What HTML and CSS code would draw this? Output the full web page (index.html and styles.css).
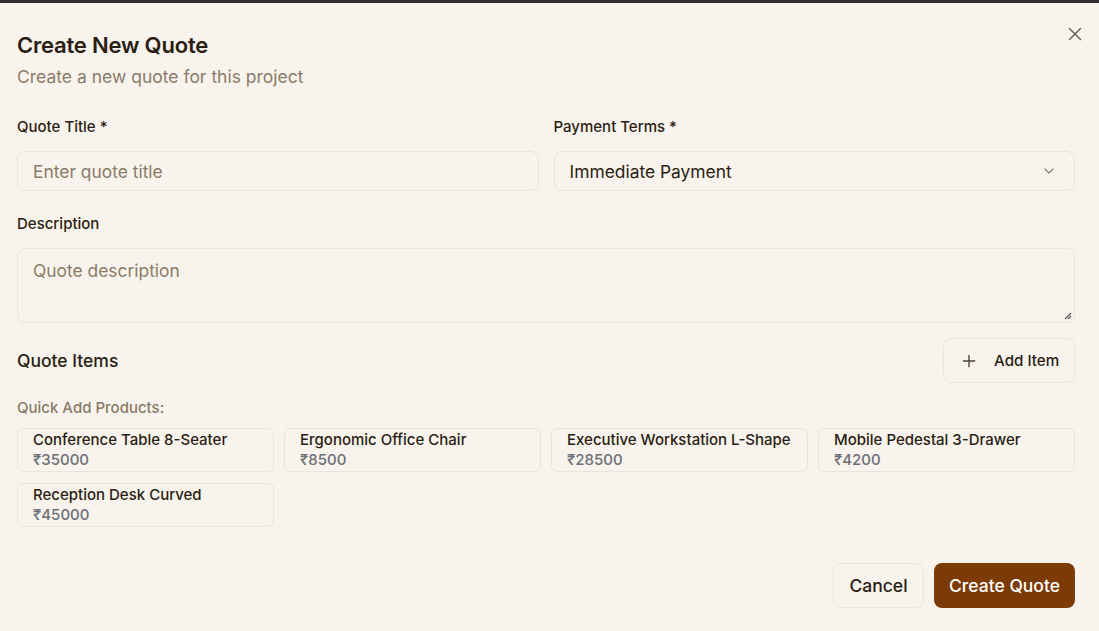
FILE: index.html
```html
<!DOCTYPE html>
<html lang="en">
<head>
<meta charset="utf-8">
<title>Create New Quote</title>
<link rel="stylesheet" href="styles.css">
</head>
<body>
<div class="topbar"></div>
<div class="dialog">
  <button class="close" aria-label="Close">
    <svg width="14" height="14" viewBox="0 0 14 14" fill="none" stroke="currentColor" stroke-width="1.5" stroke-linecap="round"><path d="M1.5 1.5 12.5 12.5M12.5 1.5 1.5 12.5"/></svg>
  </button>
  <header class="head">
    <h2 class="title">Create New Quote</h2>
    <p class="subtitle">Create a new quote for this project</p>
  </header>
  <div class="row2">
    <div class="field">
      <label class="label">Quote Title *</label>
      <div class="input placeholder">Enter quote title</div>
    </div>
    <div class="field">
      <label class="label">Payment Terms *</label>
      <div class="input select"><span>Immediate Payment</span>
        <svg width="16" height="16" viewBox="0 0 24 24" fill="none" stroke="currentColor" stroke-width="2" stroke-linecap="round" stroke-linejoin="round"><path d="m6 9 6 6 6-6"/></svg>
      </div>
    </div>
  </div>
  <div class="field desc">
    <label class="label">Description</label>
    <div class="textarea placeholder">Quote description
      <svg class="grip" width="10" height="10" viewBox="0 0 10 10" stroke="#555" stroke-width="1.2"><path d="M9 3 3 9M9 6 6 9"/></svg>
    </div>
  </div>
  <div class="items-head">
    <h3 class="items-title">Quote Items</h3>
    <button class="btn outline add">
      <svg width="18" height="18" viewBox="0 0 24 24" fill="none" stroke="currentColor" stroke-width="1.8" stroke-linecap="round"><path d="M4.5 12h15M12 4.5v15"/></svg>
      <span>Add Item</span>
    </button>
  </div>
  <p class="quick">Quick Add Products:</p>
  <div class="products">
    <div class="card"><div class="pname">Conference Table 8-Seater</div><div class="price">₹35000</div></div>
    <div class="card"><div class="pname">Ergonomic Office Chair</div><div class="price">₹8500</div></div>
    <div class="card"><div class="pname">Executive Workstation L-Shape</div><div class="price">₹28500</div></div>
    <div class="card"><div class="pname">Mobile Pedestal 3-Drawer</div><div class="price">₹4200</div></div>
    <div class="card"><div class="pname">Reception Desk Curved</div><div class="price">₹45000</div></div>
  </div>
  <footer class="actions">
    <button class="btn outline cancel">Cancel</button>
    <button class="btn primary">Create Quote</button>
  </footer>
</div>
</body>
</html>
```
FILE: styles.css
```css
* { box-sizing: border-box; }
html, body { margin: 0; height: 100%; }
body {
  background: #f8f3ec;
  font-family: Inter, "Noto Sans", sans-serif;
  color: #2a1d12;
  overflow: hidden;
}
.topbar { height: 3px; background: #2e2e2e; }
.dialog {
  position: relative;
  padding: 28px 24px 0 17px;
}
.close {
  position: absolute;
  top: 24px;
  right: 17px;
  background: none;
  border: 0;
  padding: 0;
  color: #6b6259;
  width: 14px;
  height: 14px;
  display: flex;
}
.head { margin-bottom: 28px; }
.title {
  margin: 0;
  font-size: 22px;
  font-weight: 600;
  line-height: 28px;
  letter-spacing: -0.2px;
}
.subtitle {
  margin: 6px 0 0;
  font-size: 17.5px;
  line-height: 24px;
  color: #8a7b68;
}
.row2 {
  display: grid;
  grid-template-columns: 1fr 1fr;
  gap: 15px;
}
.field { display: flex; flex-direction: column; }
.label {
  font-size: 15px;
  font-weight: 500;
  line-height: 20px;
  margin-bottom: 14px;
  color: #2a1d12;
}
.input, .textarea {
  border: 1px solid #ebe4da;
  border-radius: 8px;
  background: #f8f3ec;
  font-size: 17.4px;
  padding: 0 15px;
}
.input {
  height: 40px;
  display: flex;
  align-items: center;
}
.placeholder { color: #8a7b68; }
.select { justify-content: space-between; color: #2a1d12; }
.select svg { color: #8d857c; margin-right: 2px; }
.desc { margin-top: 23px; }
.textarea {
  height: 75px;
  padding-top: 11px;
  line-height: 22px;
  position: relative;
}
.grip { position: absolute; right: 2px; bottom: 2px; }
.items-head {
  display: flex;
  justify-content: space-between;
  align-items: center;
  margin-top: 15px;
}
.items-title {
  margin: 0;
  font-size: 17.5px;
  font-weight: 500;
}
.btn {
  font-family: inherit;
  border-radius: 8px;
  height: 45px;
  font-size: 17.5px;
  cursor: pointer;
  white-space: nowrap;
}
.outline {
  background: #f8f3ec;
  border: 1px solid #ece5dc;
  color: #2a1d12;
}
.add {
  display: flex;
  align-items: center;
  gap: 16px;
  padding: 0 15px 0 16px;
  font-size: 15.2px;
  font-weight: 500;
  width: 132px;
}
.add svg { color: #4a3f36; flex: none; }
.quick {
  margin: 15px 0 10px;
  font-size: 15px;
  font-weight: 500;
  color: #8a7b68;
  line-height: 20px;
}
.products {
  display: grid;
  grid-template-columns: repeat(4, 1fr);
  column-gap: 10px;
  row-gap: 11px;
}
.card {
  height: 44px;
  border: 1px solid #ebe4da;
  border-radius: 6px;
  padding: 1px 15px 0;
}
.pname {
  font-size: 15px;
  font-weight: 500;
  line-height: 20px;
}
.price {
  font-size: 15px;
  font-weight: 500;
  line-height: 20px;
  color: #6b6f78;
}
.actions {
  display: flex;
  justify-content: flex-end;
  gap: 10px;
  margin-top: 36px;
}
.cancel { width: 91px; font-weight: 500; }
.primary {
  width: 141px;
  background: #7c3a04;
  border: 0;
  color: #fff;
  font-weight: 500;
}
```
